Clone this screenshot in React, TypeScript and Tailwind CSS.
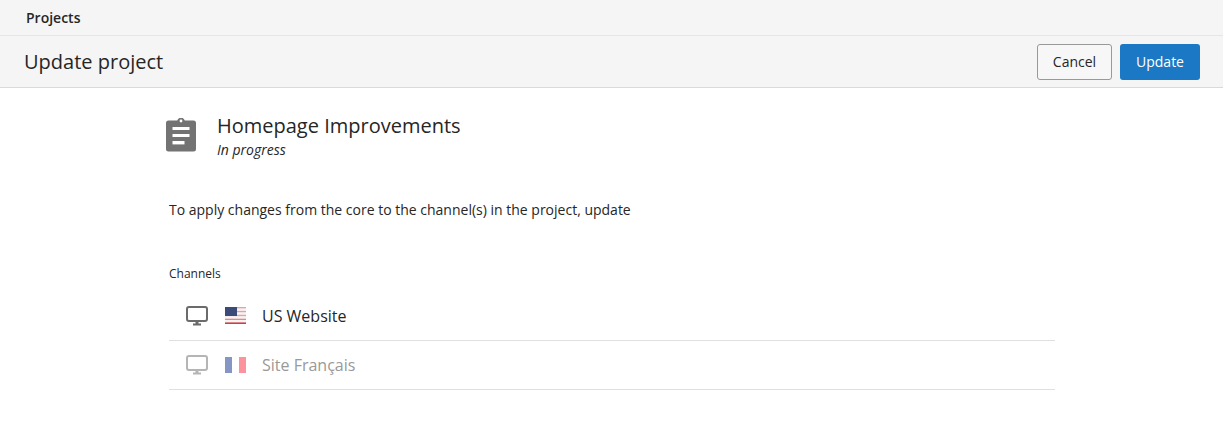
const font = "font-['Open_Sans',sans-serif]";

function ClipboardIcon() {
  return (
    <svg width="30" height="34" viewBox="0 0 30 34" className="shrink-0">
      <path
        d="M2.5 2.5h8.7a4 4 0 0 1 7.6 0h8.7A2.5 2.5 0 0 1 30 5v26a2.5 2.5 0 0 1-2.5 2.5h-25A2.5 2.5 0 0 1 0 31V5a2.5 2.5 0 0 1 2.5-2.5z"
        fill="#737373"
      />
      <circle cx="15" cy="3" r="1.4" fill="#fff" />
      <rect x="6.5" y="9" width="17" height="3" fill="#fff" />
      <rect x="6.5" y="16" width="17" height="3" fill="#fff" />
      <rect x="6.5" y="23" width="12" height="3.4" fill="#fff" />
    </svg>
  );
}

function Monitor({ muted }: { muted?: boolean }) {
  const c = muted ? "#b5b5b5" : "#6b6b6b";
  return (
    <svg width="22" height="20" viewBox="0 0 22 20" className="shrink-0">
      <rect x="1" y="1" width="20" height="14" rx="2" fill="none" stroke={c} strokeWidth="2" />
      <rect x="9.5" y="15" width="3" height="3" fill={c} />
      <rect x="7" y="17.5" width="8" height="2" fill={c} />
    </svg>
  );
}

function UsFlag() {
  return (
    <svg width="21" height="17" viewBox="0 0 21 17" className="shrink-0">
      <rect width="21" height="17" fill="#f7f3f3" />
      <rect y="0" width="21" height="1.3" fill="#e9a0a4" />
      <rect y="3.9" width="21" height="1.3" fill="#e9a0a4" />
      <rect y="7.8" width="21" height="1.3" fill="#e9a0a4" />
      <rect y="11.7" width="21" height="1.3" fill="#e08a8f" />
      <rect y="15.4" width="21" height="1.6" fill="#c8414a" />
      <rect width="12" height="9" fill="#3b4a78" />
    </svg>
  );
}

function FrFlag() {
  return (
    <div className="flex h-4 w-[21px] shrink-0">
      <div className="flex-1 bg-[#8496c4]" />
      <div className="flex-1 bg-white" />
      <div className="flex-1 bg-[#fc929b]" />
    </div>
  );
}

export default function App() {
  return (
    <div className={`min-h-[427px] bg-white ${font} text-[#262626]`}>
      <div className="flex h-[36px] items-center border-b border-[#e6e6e6] bg-[#f5f5f5] pl-[26px] text-[14px] font-semibold">
        Projects
      </div>
      <div className="flex h-[52px] items-center justify-between border-b border-[#d9d9d9] bg-[#f5f5f5] pl-6 pr-[23px]">
        <h1 className="text-[20px]">Update project</h1>
        <div className="flex gap-2">
          <button className="h-9 w-[75px] rounded-[3px] border border-[#999] bg-[#f7f7f7] text-[14px]">
            Cancel
          </button>
          <button className="h-9 w-20 rounded-[3px] bg-[#1b78c4] text-[14px] font-medium text-white">
            Update
          </button>
        </div>
      </div>

      <div className="ml-[169px] w-[886px]">
        <div className="flex items-start pt-[26px]">
          <div className="-ml-[3px] mt-[4px]">
            <ClipboardIcon />
          </div>
          <div className="ml-[21px]">
            <div className="text-[20px] leading-[24px]">Homepage Improvements</div>
            <div className="text-[14px] italic leading-[24px]">In progress</div>
          </div>
        </div>

        <p className="mt-[38px] text-[14px] leading-[20px]">
          To apply changes from the core to the channel(s) in the project, update
        </p>

        <div className="mt-[46px] text-[12px] leading-[16px]">Channels</div>

        <div className="mt-[9px]">
          <div className="flex h-[50px] items-center border-b border-[#e0e0e0] pl-[17px]">
            <Monitor />
            <div className="ml-[17px]">
              <UsFlag />
            </div>
            <span className="ml-4 text-[16px]">US Website</span>
          </div>
          <div className="flex h-[49px] items-center border-b border-[#e0e0e0] pl-[17px]">
            <Monitor muted />
            <div className="ml-[17px]">
              <FrFlag />
            </div>
            <span className="ml-4 text-[16px] text-[#999]">Site Français</span>
          </div>
        </div>
      </div>
    </div>
  );
}
